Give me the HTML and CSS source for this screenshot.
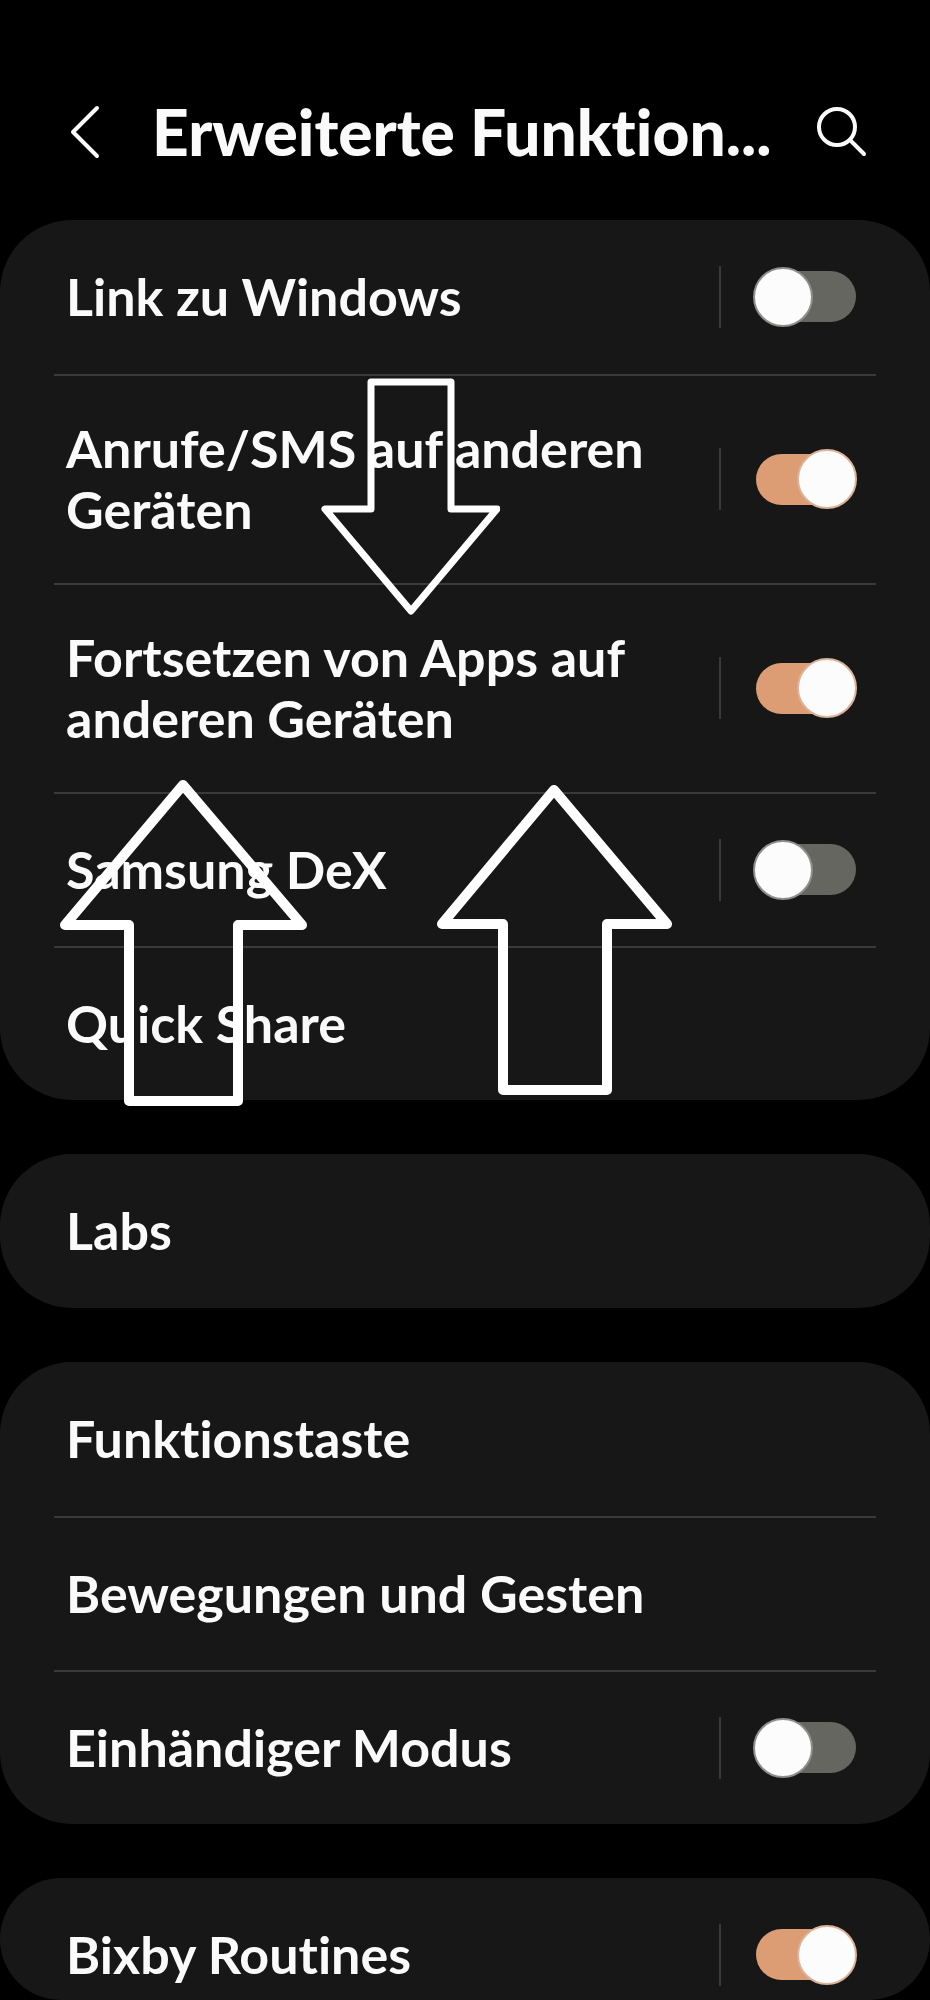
FILE: index.html
```html
<!DOCTYPE html>
<html lang="de">
<head>
    <meta charset="utf-8">
    <title>Erweiterte Funktionen</title>
    <meta name="viewport" content="width=device-width, initial-scale=1">
    <link rel="stylesheet" href="styles.css">
</head>
<body>
    <header class="top">
        <button class="icon" type="button" aria-label="Zurück">
            <svg width="54" height="60" viewBox="0 0 54 60"><path d="M43 6 19 30l24 24"/></svg>
        </button>
        <h1>Erweiterte Funktion...</h1>
        <button class="icon" type="button" aria-label="Suchen">
            <svg width="54" height="60" viewBox="0 0 54 60"><circle cx="23" cy="25" r="18"/><path d="m36 38 14 14"/></svg>
        </button>
    </header>

    <main>
        <ul class="card">
            <li><label for="windows">Link zu Windows</label><span class="sw"><input type="checkbox" role="switch" id="windows"></span></li>
            <li><label for="anrufe">Anrufe/SMS auf anderen Geräten</label><span class="sw"><input type="checkbox" role="switch" id="anrufe" checked></span></li>
            <li><label for="apps">Fortsetzen von Apps auf anderen Geräten</label><span class="sw"><input type="checkbox" role="switch" id="apps" checked></span></li>
            <li><label for="dex">Samsung DeX</label><span class="sw"><input type="checkbox" role="switch" id="dex"></span></li>
            <li><a href="#share">Quick Share</a></li>
        </ul>

        <ul class="card">
            <li><a href="#labs">Labs</a></li>
        </ul>

        <ul class="card">
            <li><a href="#taste">Funktionstaste</a></li>
            <li><a href="#gesten">Bewegungen und Gesten</a></li>
            <li><label for="hand">Einhändiger Modus</label><span class="sw"><input type="checkbox" role="switch" id="hand"></span></li>
        </ul>

        <ul class="card last">
            <li><label for="bixby">Bixby Routines</label><span class="sw"><input type="checkbox" role="switch" id="bixby" checked></span></li>
        </ul>
    </main>

    <!-- Pfeile über der Liste -->
    <svg class="arrow down" width="180" height="240" viewBox="320 376 180 240"><path d="M371 382h80v127h46l-86 102-86-102h46z"/></svg>
    <svg class="arrow left" width="250" height="330" viewBox="59 778 250 330"><path d="m183 785 119 140h-64v176H129V925H65z"/></svg>
    <svg class="arrow right" width="240" height="314" viewBox="434 784 240 314"><path d="m554 790 113 134h-60v166H503V924h-61z"/></svg>
</body>
</html>
```
FILE: styles.css
```css
:root {
    --bg: #000;
    --card: #171717;
    --line: #3a3a3a;
    --text: #fafafa;
    --on: #dd9d74;
    --off: #65665f;
}

*,
*::before {
    box-sizing: border-box;
}

body {
    margin: 0;
    height: 100vh;
    display: flex;
    flex-direction: column;
    position: relative;
    overflow: hidden;
    background: var(--bg);
    color: var(--text);
    font-family: Lato, "Open Sans", sans-serif;
    font-size: 52px;
    font-weight: 700;
    font-variant-ligatures: none;
    line-height: 61px;
}

/* Kopfzeile */
.top {
    display: flex;
    align-items: center;
    height: 220px;
    padding: 44px 62px 0 54px;
    flex-shrink: 0;
}

h1 {
    flex: 1;
    min-width: 0;
    margin: 0 0 0 44px;
    font-size: 64px;
    font-weight: 900;
    line-height: 80px;
    white-space: nowrap;
}

.icon {
    padding: 0;
    border: none;
    background: none;
    cursor: pointer;
}

.icon svg {
    display: block;
    fill: none;
    stroke: var(--text);
    stroke-width: 4;
    stroke-linecap: round;
    stroke-linejoin: round;
}

/* Karten */
main {
    flex: 1;
    min-height: 0;
    display: flex;
    flex-direction: column;
    gap: 54px;
}

.card {
    flex-shrink: 0;
    margin: 0;
    padding: 0 54px;
    list-style: none;
    background: var(--card);
    border-radius: 72px;
}

.last {
    flex: 1 1 0;
    min-height: 0;
    overflow: hidden;
}

li {
    display: flex;
    align-items: center;
    min-height: 154px;
    padding: 42px 20px 43px 12px;
}

li + li {
    border-top: 2px solid var(--line);
}

li label,
li a {
    flex: 1;
    color: inherit;
    text-decoration: none;
}

/* Schalter */
.sw {
    display: flex;
    align-items: center;
    height: 62px;
    margin-left: 50px;
    padding-left: 35px;
    border-left: 2px solid var(--line);
}

.sw input {
    appearance: none;
    display: flex;
    align-items: center;
    width: 100px;
    height: 51px;
    margin: 0;
    border-radius: 26px;
    background: var(--off);
    cursor: pointer;
}

.sw input::before {
    content: "";
    flex-shrink: 0;
    width: 60px;
    height: 60px;
    margin-left: -3px;
    border: 2px solid #8e8e8c;
    border-radius: 50%;
    background: #fcfcfc;
}

.sw input:checked {
    background: var(--on);
}

.sw input:checked::before {
    margin-left: 41px;
    border-color: #dcb298;
}

/* Pfeile */
.arrow {
    position: absolute;
    fill: none;
    stroke: #fff;
    stroke-width: 10;
    stroke-linejoin: round;
    pointer-events: none;
}

.down {
    left: 320px;
    top: 376px;
    stroke-width: 7;
}

.left {
    left: 59px;
    top: 778px;
}

.right {
    left: 434px;
    top: 784px;
}
```
